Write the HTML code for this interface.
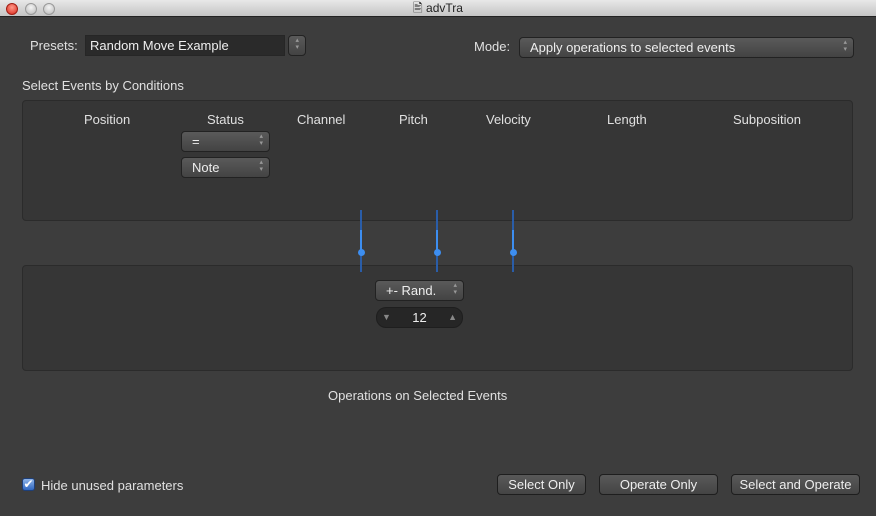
<!DOCTYPE html>
<html><head><meta charset="utf-8"><style>
*{box-sizing:border-box;margin:0;padding:0}
body{width:876px;height:516px;overflow:hidden;background:#3d3d3d;font-family:"Liberation Sans",sans-serif;color:#e2e2e2;position:relative}
.abs{position:absolute}
.title{left:0;top:0;width:876px;height:17px;background:linear-gradient(#e8e8e8,#c4c4c4);border-bottom:1px solid #222;text-align:center;color:#222;font-size:12px;line-height:16px}
.dot{top:3px;width:12px;height:12px;border-radius:50%;background:radial-gradient(circle at 50% 35%,#f4f4f4,#b8b8b8);border:1px solid #999}
.lbl{font-size:13px;color:#e0e0e0}
.panel{background:#363636;border:1px solid #2b2b2b;border-radius:4px}
.pop{background:linear-gradient(#5a5a5a,#434343);border:1px solid #222;border-radius:4px;font-size:13px;color:#eee;line-height:19px;padding-left:10px}
.pop:after{content:"▴\A▾";white-space:pre;position:absolute;right:6px;top:1px;font-size:7px;line-height:7px;color:#999}
.btn{background:linear-gradient(#595959,#444);border:1px solid #1e1e1e;border-radius:4px;font-size:13px;color:#eee;text-align:center;line-height:19px}
.line{width:2px;background:#2a5da8;top:210px;height:62px}
.line:before{content:"";position:absolute;left:0;top:20px;width:2px;height:22px;background:#3d8ef0}
.knob{width:7px;height:7px;border-radius:50%;background:#3d8ef0;top:249px}
</style></head><body>
<div class="abs title">🖹 advTra</div>
<div class="abs dot" style="left:6px;background:radial-gradient(circle at 50% 35%,#ff9a8a,#d8261a);border-color:#a01e14"></div>
<div class="abs dot" style="left:25px"></div>
<div class="abs dot" style="left:43px"></div>

<div class="abs lbl" style="left:30px;top:38px">Presets:</div>
<div class="abs" style="left:85px;top:35px;width:200px;height:21px;background:#2a2a2a;border:1px solid #262626;font-size:13px;line-height:20px;padding-left:4px;color:#eee">Random Move Example</div>
<div class="abs pop" style="left:288px;top:35px;width:18px;height:21px;padding:0"></div>

<div class="abs lbl" style="left:474px;top:39px">Mode:</div>
<div class="abs pop" style="left:519px;top:37px;width:335px;height:21px;line-height:19px">Apply operations to selected events</div>

<div class="abs lbl" style="left:22px;top:78px">Select Events by Conditions</div>
<div class="abs panel" style="left:22px;top:100px;width:831px;height:121px"></div>
<div class="abs lbl" style="left:84px;top:112px">Position</div>
<div class="abs lbl" style="left:207px;top:112px">Status</div>
<div class="abs lbl" style="left:297px;top:112px">Channel</div>
<div class="abs lbl" style="left:399px;top:112px">Pitch</div>
<div class="abs lbl" style="left:486px;top:112px">Velocity</div>
<div class="abs lbl" style="left:607px;top:112px">Length</div>
<div class="abs lbl" style="left:733px;top:112px">Subposition</div>
<div class="abs pop" style="left:181px;top:131px;width:89px;height:21px">=</div>
<div class="abs pop" style="left:181px;top:157px;width:89px;height:21px">Note</div>

<div class="abs panel" style="left:22px;top:265px;width:831px;height:106px"></div>
<div class="abs line" style="left:360px"></div><div class="abs knob" style="left:358px"></div>
<div class="abs line" style="left:436px"></div><div class="abs knob" style="left:434px"></div>
<div class="abs line" style="left:512px"></div><div class="abs knob" style="left:510px"></div>

<div class="abs pop" style="left:375px;top:280px;width:89px;height:21px">+- Rand.</div>
<div class="abs" style="left:376px;top:307px;width:87px;height:21px;border-radius:10px;background:#262626;border:1px solid #1e1e1e;font-size:13px;line-height:19px;text-align:center;color:#eee">12
<span class="abs" style="left:5px;top:0;font-size:9px;color:#888">▼</span><span class="abs" style="right:5px;top:0;font-size:9px;color:#888">▲</span></div>

<div class="abs lbl" style="left:328px;top:388px">Operations on Selected Events</div>

<div class="abs" style="left:22px;top:478px;width:13px;height:13px;border-radius:3px;background:linear-gradient(#8fb5ea,#2f66c0);border:1px solid #1d3f7a;color:#fff;font-size:12px;line-height:11px;text-align:center">✔</div>
<div class="abs lbl" style="left:41px;top:478px">Hide unused parameters</div>
<div class="abs btn" style="left:497px;top:474px;width:89px;height:21px">Select Only</div>
<div class="abs btn" style="left:599px;top:474px;width:119px;height:21px">Operate Only</div>
<div class="abs btn" style="left:731px;top:474px;width:129px;height:21px">Select and Operate</div>
</body></html>
